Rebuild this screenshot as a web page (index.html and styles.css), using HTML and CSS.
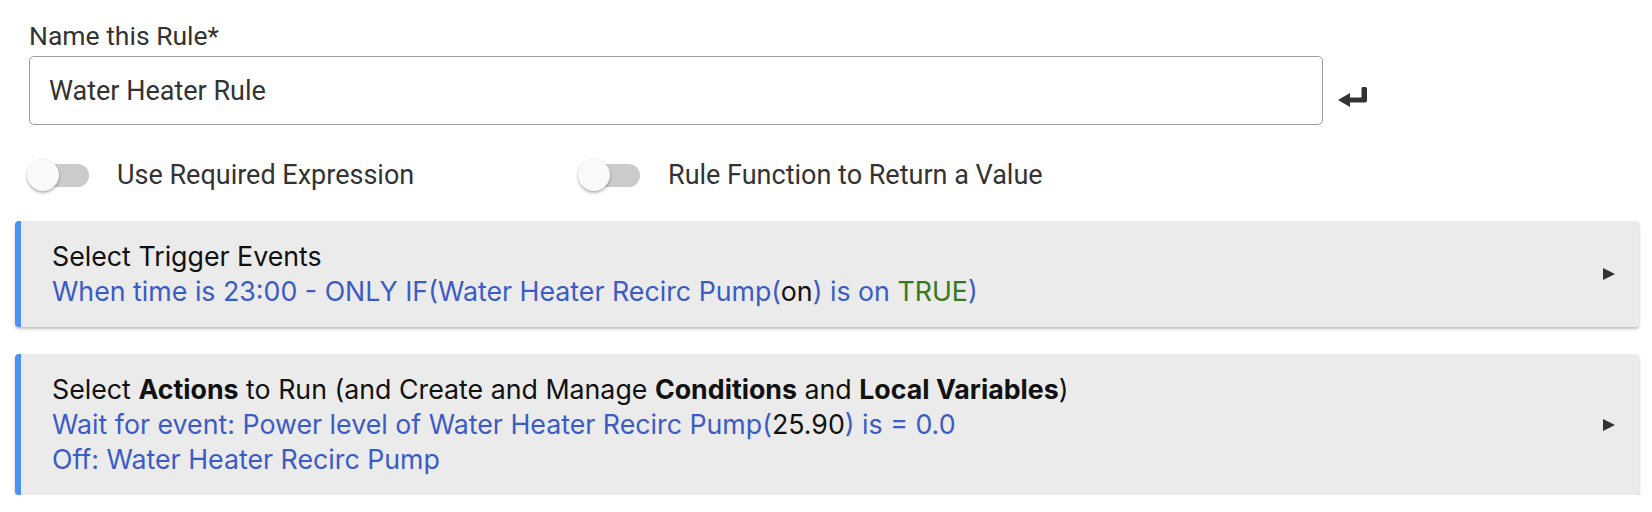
FILE: index.html
```html
<!DOCTYPE html>
<html>
<head>
<meta charset="utf-8">
<link rel="stylesheet" href="styles.css">
</head>
<body>
<div class="page">
  <div class="field">
    <div class="field-label">Name this Rule*</div>
    <div class="input-row">
      <div class="input">Water Heater Rule</div>
      <svg class="return-icon" width="29" height="20" viewBox="0 0 29 20">
        <path d="M23.5 1.5 Q23.5 0 25 0 H27.5 Q29 0 29 1.5 V13.5 Q29 15.5 27 15.5 H11 V10.5 H23.5 Z" fill="#333"/>
        <polygon points="0,13 12,6 12,20" fill="#333"/>
      </svg>
    </div>
  </div>
  <div class="toggles">
    <div class="toggle-item">
      <div class="switch"><span class="track"></span><span class="thumb"></span></div>
      <span class="toggle-label">Use Required Expression</span>
    </div>
    <div class="toggle-item">
      <div class="switch"><span class="track"></span><span class="thumb"></span></div>
      <span class="toggle-label">Rule Function to Return a Value</span>
    </div>
  </div>
  <div class="cards">
    <div class="card">
      <div class="card-body">
        <div class="card-title">Select Trigger Events</div>
        <div class="card-line">When time is 23:00 - ONLY IF(Water Heater Recirc Pump(<span class="val">on</span>) is on <span class="true">TRUE</span>)</div>
      </div>
      <span class="caret"></span>
    </div>
    <div class="card">
      <div class="card-body">
        <div class="card-title">Select <b>Actions</b> to Run (and Create and Manage <b>Conditions</b> and <b>Local Variables</b>)</div>
        <div class="card-line">Wait for event: Power level of Water Heater Recirc Pump(<span class="val">25.90</span>) is = 0.0</div>
        <div class="card-line">Off: Water Heater Recirc Pump</div>
      </div>
      <span class="caret"></span>
    </div>
  </div>
</div>
</body>
</html>
```
FILE: styles.css
```css
* { box-sizing: border-box; }
html, body { margin: 0; padding: 0; background: #fff; }
body { font-family: Roboto, "Noto Sans", sans-serif; color: #333; }

.page {
  padding: 20px 13px 0 15px;
}

.field {
  padding-left: 14px;
}
.field-label {
  font-size: 26.5px;
  line-height: 32px;
  color: #333;
}
.input-row {
  margin-top: 4px;
  display: flex;
  align-items: center;
  gap: 15px;
}
.input {
  width: 1294px;
  height: 69px;
  border: 1.5px solid #9e9e9e;
  border-radius: 5px;
  padding: 0 0 0 19px;
  display: flex;
  align-items: center;
  font-size: 27px;
  color: #333;
}
.return-icon {
  margin-top: 12px;
}

.toggles {
  margin-top: 33px;
  padding-left: 12px;
  display: grid;
  grid-template-columns: 551px auto;
}
.toggle-item {
  display: flex;
  align-items: center;
  gap: 28px;
}
.switch {
  position: relative;
  width: 62px;
  height: 34px;
  flex: none;
}
.track {
  position: absolute;
  left: 3px;
  top: 6px;
  width: 59px;
  height: 23px;
  border-radius: 12px;
  background: #cbcbcb;
}
.thumb {
  position: absolute;
  left: 0;
  top: 1px;
  width: 32px;
  height: 32px;
  border-radius: 50%;
  background: #fafafa;
  box-shadow: 0 2px 3px rgba(0,0,0,0.28), 0 0 1px rgba(0,0,0,0.15);
}
.toggle-label {
  font-size: 27px;
  color: #333;
  line-height: 34px;
}

.cards {
  margin-top: 29px;
  display: flex;
  flex-direction: column;
  gap: 27px;
}
.card {
  background: #ebebeb;
  border-left: 6px solid #4a92f6;
  border-radius: 4px;
  box-shadow: 0 2px 3px rgba(0,0,0,0.25);
  display: flex;
  align-items: center;
  padding: 18px 24px 18px 31px;
  font-family: Inter, "Noto Sans", sans-serif;
  font-size: 26.75px;
  line-height: 35px;
}
.card-body {
  flex: 1;
}
.card-title {
  color: #111;
}
.card-title b { font-weight: 700; }
.card-line {
  color: #3b5bc6;
}
.val { color: #111; }
.true { color: #357a1e; }
.caret {
  width: 0;
  height: 0;
  border-top: 6.5px solid transparent;
  border-bottom: 6.5px solid transparent;
  border-left: 12px solid #333;
}
```
